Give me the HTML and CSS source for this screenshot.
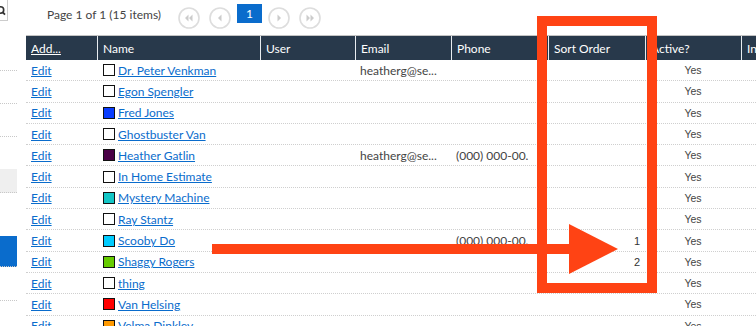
FILE: index.html
```html
<!DOCTYPE html>
<html lang="en">
<head>
  <meta charset="UTF-8">
  <title>Contacts</title>
  <link rel="stylesheet" href="styles.css">
</head>
<body>
  <div class="page">
    <aside class="side">
      <div class="side-search">
        <svg width="8" height="21" viewBox="0 0 8 21"><circle cx="0.5" cy="10" r="3.2" fill="none" stroke="#333" stroke-width="1.6"/><line x1="2.6" y1="12.2" x2="5" y2="14.6" stroke="#333" stroke-width="1.8"/></svg>
      </div>
      <div class="side-item first"></div>
      <div class="side-item"></div>
      <div class="side-item"></div>
      <div class="side-item plain"></div>
      <div class="side-item grey"></div>
      <div class="side-item gap"></div>
      <div class="side-item selected"></div>
      <div class="side-item"></div>
    </aside>

    <main class="main">
      <div class="pager">
        <span class="pager-info">Page 1 of 1 (15 items)</span>
        <span class="pager-btn"><svg width="22" height="22" viewBox="0 0 22 22"><circle cx="11" cy="11" r="10" fill="none" stroke="#ddd" stroke-width="1.6"/><path d="M10.5 7.5 7 11l3.5 3.5zM14.5 7.5 11 11l3.5 3.5z" fill="#ccc"/></svg></span>
        <span class="pager-btn"><svg width="22" height="22" viewBox="0 0 22 22"><circle cx="11" cy="11" r="10" fill="none" stroke="#ddd" stroke-width="1.6"/><path d="M12.5 7.5 9 11l3.5 3.5z" fill="#ccc"/></svg></span>
        <span class="pager-page">1</span>
        <span class="pager-btn"><svg width="22" height="22" viewBox="0 0 22 22"><circle cx="11" cy="11" r="10" fill="none" stroke="#ddd" stroke-width="1.6"/><path d="M9.5 7.5 13 11l-3.5 3.5z" fill="#ccc"/></svg></span>
        <span class="pager-btn"><svg width="22" height="22" viewBox="0 0 22 22"><circle cx="11" cy="11" r="10" fill="none" stroke="#ddd" stroke-width="1.6"/><path d="M7.5 7.5 11 11l-3.5 3.5zM11.5 7.5 15 11l-3.5 3.5z" fill="#ccc"/></svg></span>
      </div>

      <div class="grid">
        <div class="row head">
          <div class="cell c-add"><a href="#">Add...</a></div>
          <div class="cell c-name">Name</div>
          <div class="cell c-user">User</div>
          <div class="cell c-email">Email</div>
          <div class="cell c-phone">Phone</div>
          <div class="cell c-sort">Sort Order</div>
          <div class="cell c-active">Active?</div>
          <div class="cell c-in">In</div>
        </div>
        <div id="rows"></div>
      </div>
    </main>

    <svg class="annot" width="756" height="326" viewBox="0 0 756 326">
      <rect x="542" y="21" width="110" height="267" fill="none" stroke="#ff4314" stroke-width="10"/>
      <line x1="212" y1="249" x2="575" y2="249" stroke="#ff4314" stroke-width="10"/>
      <polygon points="569,224 618,249 569,274" fill="#ff4314"/>
    </svg>
  </div>

  <script>
    const people = [
      { name: "Dr. Peter Venkman", color: "#fff", email: "heatherg@se..." },
      { name: "Egon Spengler", color: "#fff" },
      { name: "Fred Jones", color: "#0a3dff" },
      { name: "Ghostbuster Van", color: "#fff" },
      { name: "Heather Gatlin", color: "#4a0046", email: "heatherg@se...", phone: "(000) 000-00." },
      { name: "In Home Estimate", color: "#fff" },
      { name: "Mystery Machine", color: "#13c6c6" },
      { name: "Ray Stantz", color: "#fff" },
      { name: "Scooby Do", color: "#00ccff", phone: "(000) 000-00.", sort: 1 },
      { name: "Shaggy Rogers", color: "#66cc00", sort: 2 },
      { name: "thing", color: "#fff" },
      { name: "Van Helsing", color: "#ff0000" },
      { name: "Velma Dinkley", color: "#ff9900" }
    ];

    const rows = document.getElementById('rows');
    rows.innerHTML = people.map(p => `
      <div class="row">
        <div class="cell c-add"><a href="#">Edit</a></div>
        <div class="cell c-name"><span class="swatch" style="background:${p.color}"></span><a href="#">${p.name}</a></div>
        <div class="cell c-user"></div>
        <div class="cell c-email">${p.email || ''}</div>
        <div class="cell c-phone">${p.phone || ''}</div>
        <div class="cell c-sort num">${p.sort || ''}</div>
        <div class="cell c-active yes">Yes</div>
        <div class="cell c-in"></div>
      </div>`).join('');
  </script>
</body>
</html>
```

FILE: styles.css
```css
html, body { margin: 0; height: 100%; overflow: hidden; background: #fff; }
body { font-family: "Lato", "Open Sans", sans-serif; font-size: 12px; color: #444; }

.page { position: relative; display: flex; width: 756px; height: 326px; overflow: hidden; }

/* left navigation pane, mostly cut off */
.side { width: 17px; flex: none; display: flex; flex-direction: column; }
.side-search { width: 8px; height: 21px; box-sizing: border-box; border: 1px solid #ccc; border-left: none; border-top: none; }
.side-search svg { display: block; }
.side-item { height: 33px; border-bottom: 1px dotted #c8c8c8; box-sizing: border-box; }
.side-item.first { height: 50px; }
.side-item.plain { height: 32px; border-bottom: none; }
.side-item.grey { height: 24px; background: #efefef; }
.side-item.gap { height: 43px; border-bottom: none; }
.side-item.selected { height: 31px; background: #0a6ccc; }
.side-item:last-child { height: 34px; }

.main { flex: 1; padding-left: 9px; min-width: 0; }

.pager { height: 35px; display: flex; align-items: center; padding-left: 21px; }
.pager-info { font-size: 12px; line-height: 16px; color: #444; margin-right: 17px; align-self: flex-start; margin-top: 7px; }
.pager-btn { display: flex; margin-right: 9px; margin-top: 1px; }
.pager-page {
  width: 25px; height: 19px; background: #0a6ccc; color: #fff; font-size: 12px;
  display: flex; align-items: center; justify-content: center;
  align-self: flex-start; margin: 4px 6px 0 -3px;
}

.grid { border-top: 1px solid #c4c4c4; width: 812px; }
.row { display: flex; height: 21.3px; box-sizing: border-box; border-bottom: 1px dotted #cfcfcf; }
.row.head { height: 24px; background: #28394b; color: #fff; border-bottom: none; }
.cell { display: flex; align-items: center; padding-left: 5px; box-sizing: border-box; white-space: nowrap; overflow: hidden; }
.head .cell { border-left: 1px solid #e8ecf0; font-size: 12px; padding-left: 5px; }
.head .cell:first-child { border-left: none; }
.head a { color: #fff; }

.c-add { width: 71px; }
.c-name { width: 163px; }
.c-user { width: 95px; }
.c-email { width: 96px; }
.c-phone { width: 97px; }
.c-sort { width: 97px; }
.c-active { width: 96px; }
.c-in { width: 96px; }

a { color: #0a6ccc; text-decoration: underline; }

.swatch { width: 10px; height: 10px; border: 1px solid #111; margin: 0 3px 0 1px; flex: none; }

.num { justify-content: flex-end; padding-right: 5px; font-family: "Liberation Sans", Arial, sans-serif; font-size: 11px; color: #333; }
.yes { justify-content: center; padding-left: 0; font-family: "Liberation Sans", Arial, sans-serif; font-size: 10.5px; color: #444; }

.annot { position: absolute; left: 0; top: 0; pointer-events: none; }
```
